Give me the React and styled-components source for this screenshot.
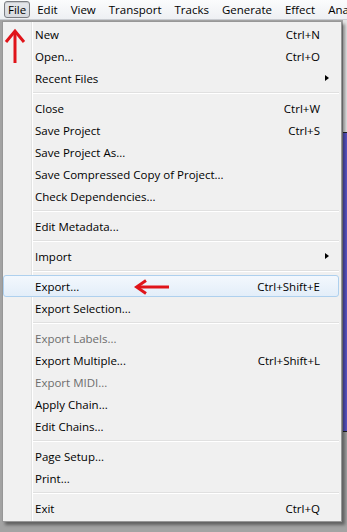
import React from 'react';
import styled, { createGlobalStyle } from 'styled-components';

const Global = createGlobalStyle`
  html, body { margin: 0; padding: 0; }
  body {
    width: 347px;
    height: 532px;
    overflow: hidden;
    background: #a3a3a3;
    font-family: "Open Sans", "Noto Sans", sans-serif;
  }
`;

const Window = styled.div`
  position: relative;
  width: 347px;
  height: 532px;
  display: flex;
  flex-direction: column;
`;

const MenuBar = styled.div`
  height: 21px;
  display: flex;
  align-items: center;
  gap: 1px;
  padding-left: 4px;
  background: linear-gradient(#fbfcfd, #eef0f3);
  border-bottom: 1px solid #c9ccd1;
  box-sizing: border-box;
  white-space: nowrap;
  overflow: hidden;
`;

const BarItem = styled.div`
  font-size: 11.5px;
  color: #000;
  height: 17px;
  line-height: 16px;
  padding: 0 ${p => p.$active ? 3 : 5}px;
  box-sizing: border-box;
  border: 1px solid ${p => p.$active ? '#7c7f84' : 'transparent'};
  border-radius: 3px;
  background: ${p => p.$active ? 'linear-gradient(#e6e8ec, #d7dadf)' : 'transparent'};
  box-shadow: ${p => p.$active ? 'inset 0 1px 1px rgba(0,0,0,0.15)' : 'none'};
`;

const Workspace = styled.div`
  flex: 1;
  display: flex;
  justify-content: flex-end;
`;

const TrackStrip = styled.div`
  width: 4px;
  display: flex;
  flex-direction: column;
`;

const TrackPart = styled.div`
  height: ${p => p.$h}px;
  background: ${p => p.$bg};
  border-top: ${p => p.$line ? '1px solid #222' : 'none'};
`;

const Dropdown = styled.div`
  position: absolute;
  left: 2px;
  top: 21px;
  width: 340px;
  box-sizing: border-box;
  padding: 1px 2px 2px;
  border: 1px solid #979797;
  background: linear-gradient(to right,
    #f1f1f1 0 28px, #e2e3e3 28px 29px, #ffffff 29px 30px, #f0f0f0 30px);
  box-shadow: 3px 3px 3px rgba(0, 0, 0, 0.4);
`;

const Row = styled.div`
  height: 22px;
  display: grid;
  grid-template-columns: 1fr auto 18px;
  align-items: center;
  box-sizing: border-box;
  font-size: 11.5px;
  color: ${p => p.$disabled ? '#6d6d6d' : '#000'};
  border: 1px solid ${p => p.$hot ? '#aed0ee' : 'transparent'};
  border-radius: 3px;
  margin-left: ${p => p.$hot ? -2 : 0}px;
  padding-left: ${p => p.$hot ? 31 : 29}px;
  background: ${p => p.$hot ? 'linear-gradient(#f3f8fd, #e3eef9)' : 'transparent'};
`;

const Label = styled.span`
  white-space: nowrap;
`;

const Shortcut = styled.span`
  white-space: nowrap;
  text-align: right;
`;

const Arrow = styled.span`
  justify-self: end;
  margin-right: 9px;
  width: 0;
  height: 0;
  border-top: 3.5px solid transparent;
  border-bottom: 3.5px solid transparent;
  border-left: 4px solid #000;
`;

const Separator = styled.div`
  height: 8px;
  display: flex;
  align-items: center;
  padding-left: 28px;
  &::after {
    content: '';
    flex: 1;
    height: 1px;
    background: #e0e0e0;
    border-bottom: 1px solid #fff;
  }
`;

const Mark = styled.svg`
  position: absolute;
  left: ${p => p.$x}px;
  top: ${p => p.$y}px;
`;

const items = [
  { label: 'New', key: 'Ctrl+N' },
  { label: 'Open...', key: 'Ctrl+O' },
  { label: 'Recent Files', sub: true },
  'sep',
  { label: 'Close', key: 'Ctrl+W' },
  { label: 'Save Project', key: 'Ctrl+S' },
  { label: 'Save Project As...' },
  { label: 'Save Compressed Copy of Project...' },
  { label: 'Check Dependencies...' },
  'sep',
  { label: 'Edit Metadata...' },
  'sep',
  { label: 'Import', sub: true },
  'sep',
  { label: 'Export...', key: 'Ctrl+Shift+E', hot: true },
  { label: 'Export Selection...' },
  'sep',
  { label: 'Export Labels...', disabled: true },
  { label: 'Export Multiple...', key: 'Ctrl+Shift+L' },
  { label: 'Export MIDI...', disabled: true },
  { label: 'Apply Chain...' },
  { label: 'Edit Chains...' },
  'sep',
  { label: 'Page Setup...' },
  { label: 'Print...' },
  'sep',
  { label: 'Exit', key: 'Ctrl+Q' },
];

const bar = ['File', 'Edit', 'View', 'Transport', 'Tracks', 'Generate', 'Effect', 'Analyze'];

export default function App() {
  return (
    <Window>
      <Global />
      <MenuBar>
        {bar.map((b, i) => (
          <BarItem key={b} $active={i === 0}>{b}</BarItem>
        ))}
      </MenuBar>
      <Workspace>
        <TrackStrip>
          <TrackPart $h={112} $bg="#e4e4e4" />
          <TrackPart $h={298} $bg="#5a55c8" $line />
          <TrackPart $h={100} $bg="#a3a3a3" $line />
        </TrackStrip>
      </Workspace>

      <Dropdown>
        {items.map((it, i) =>
          it === 'sep' ? (
            <Separator key={i} />
          ) : (
            <Row key={i} $hot={it.hot} $disabled={it.disabled}>
              <Label>{it.label}</Label>
              <Shortcut>{it.key}</Shortcut>
              {it.sub ? <Arrow /> : <span />}
            </Row>
          )
        )}
      </Dropdown>

      <Mark $x={4} $y={28} width="22" height="36" viewBox="0 0 22 36">
        <path d="M11 4 L11 35" stroke="#e0141a" strokeWidth="3" />
        <path d="M2 14 L11 3 L20 14" stroke="#e0141a" strokeWidth="3" fill="none" />
      </Mark>
      <Mark $x={134} $y={279} width="36" height="16" viewBox="0 0 36 16">
        <path d="M3 8 L35 8" stroke="#e0141a" strokeWidth="3" />
        <path d="M12 1.5 L2.5 8 L12 14.5" stroke="#e0141a" strokeWidth="3" fill="none" />
      </Mark>
    </Window>
  );
}
